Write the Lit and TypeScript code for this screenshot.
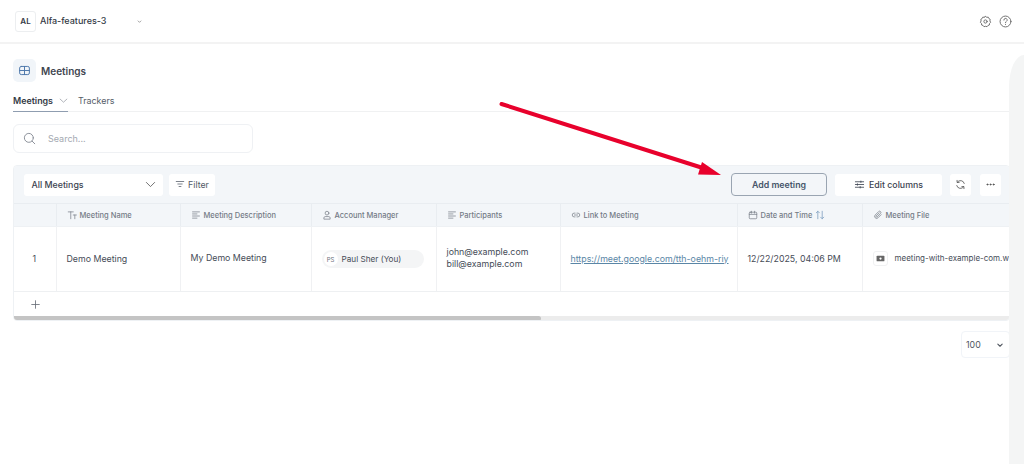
import { LitElement, html, css, svg } from "lit";
import { customElement } from "lit/decorators.js";

const ic = (body: unknown, size = 12, cls = "") => html`<svg class=${cls} width=${size} height=${size} viewBox="0 0 16 16" fill="none" stroke="currentColor" stroke-width="1.2" stroke-linecap="round" stroke-linejoin="round">${body}</svg>`;

const lines = svg`<path d="M2.5 3h11M2.5 6.3h7M2.5 9.6h11M2.5 13h7"/>`;

@customElement("app-root")
export class AppRoot extends LitElement {
  static styles = css`
    :host { display: block; width: 1024px; height: 464px; position: relative; overflow: hidden; background: #fff; font-family: Inter, "Liberation Sans", sans-serif; color: #3c4350; }
    * { box-sizing: border-box; }
    svg { display: block; flex: none; }
    .top { height: 44px; border-bottom: 2px solid #f3f3f3; display: flex; align-items: center; padding: 0 12px 0 15px; }
    .logo { width: 21px; height: 21px; border: 1px solid #eceef0; border-radius: 3px; display: flex; align-items: center; justify-content: center; font-size: 8px; font-weight: 600; color: #343a45; }
    .org { margin-left: 4px; width: 95px; font-size: 9px; font-weight: 500; color: #343a45; padding-bottom: 1px; }
    .small-chev { color: #777; }
    .top-right { margin-left: auto; display: flex; gap: 7px; color: #6f6f6f; }
    .main { padding: 15px 14px 0 13px; }
    .title { display: flex; align-items: center; gap: 5px; height: 23px; font-size: 10px; font-weight: 600; color: #3f4550; padding-bottom: 0; }
    .title-ic { width: 23px; height: 23px; border-radius: 5px; background: #f1f5f9; color: #4d77ab; display: flex; align-items: center; justify-content: center; }
    .tabs { margin-top: 7px; height: 23px; border-bottom: 1px solid #f0f1f2; display: flex; font-size: 8.9px; }
    .tab { height: 23px; display: flex; align-items: center; gap: 6px; padding-right: 1px; width: 55px; font-weight: 600; color: #343a45; border-bottom: 1px solid #8f9db0; }
    .tab svg { color: #8a8f98; }
    .tab2 { margin-left: 10px; display: flex; align-items: center; color: #555c68; }
    .search { margin-top: 12px; width: 240px; height: 29px; border: 1px solid #eff1f4; border-radius: 6px; display: flex; align-items: center; padding-left: 9px; gap: 12px; font-size: 9px; color: #a4a9b1; }
    .search svg { color: #8b9099; }
    .card { margin-top: 12px; border: 1px solid #eef1f4; border-radius: 4px; overflow: hidden; width: 997px; height: 156px; }
    .bar { height: 38px; background: #f3f6f9; border-bottom: 1px solid #e9edf1; display: flex; align-items: center; padding: 0 8px 0 10px; gap: 6px; }
    .btn { height: 22px; background: #fff; border-radius: 3px; display: flex; align-items: center; justify-content: center; font-size: 8.8px; color: #525a66; padding-bottom: 1px; }
    .select { width: 139px; justify-content: space-between; padding: 0 7px 0 7.500px; color: #3c4350; font-weight: 500; }
    .select svg { color: #555; }
    .filter { width: 46px; gap: 3px; }
    .right { margin-left: auto; display: flex; align-items: center; }
    .add { width: 96px; height: 23px; border: 1px solid #9aa5b2; background: #f3f6f9; border-radius: 4px; font-weight: 600; color: #47566b; }
    .edit { width: 107px; margin-left: 8px; gap: 4px; font-weight: 500; color: #3c4350; }
    .sq { width: 21px; margin-left: 8px; color: #555; padding-bottom: 0; }
    .sq.last { margin-left: 9px; }
    .row { display: grid; grid-template-columns: 43px 124px 131px 125px 124px 177px 125px 1fr; }
    .head { height: 23px; background: #f3f6f9; border-bottom: 1px solid #eef1f4; }
    .head > div { border-right: 1px solid #e9edf1; display: flex; align-items: center; gap: 3px; padding-left: 9.5px; font-size: 7.5px; font-weight: 500; color: #747b86; white-space: nowrap; overflow: hidden; }
    .head > div:last-child { border-right: 0; }
    .head svg { color: #7b818b; }
    .data { height: 65px; border-bottom: 1px solid #eef0f2; }
    .data > div { border-right: 1px solid #f0f1f3; display: flex; align-items: center; padding: 0 0 2px 9.5px; font-size: 8.8px; color: #464c57; white-space: nowrap; overflow: hidden; }
    .data > div:last-child { border-right: 0; }
    .data .num { padding-left: 18.5px; }
    .data .desc { padding-bottom: 4px; }
    .data .mgr { padding-bottom: 0; }
    .pill { width: 102px; height: 18px; border-radius: 9px; background: #f4f5f6; display: flex; align-items: center; gap: 4px; padding-left: 2px; font-size: 8.2px; color: #464c57; }
    .av { width: 14px; height: 14px; border-radius: 50%; background: #fff; display: flex; align-items: center; justify-content: center; font-size: 6px; color: #6b717b; }
    .emails { line-height: 12.5px; }
    a { color: #5a86a6; text-decoration: underline; }
    .fileic { width: 15px; height: 15px; border: 1px solid #f0f1f2; border-radius: 3px; display: flex; align-items: center; justify-content: center; margin-right: 7px; flex: none; }
    .data .file { font-size: 8px; }
    .addrow { height: 24px; display: flex; align-items: center; padding-left: 16px; color: #666c76; }
    .track { height: 5px; background: #ececec; }
    .thumb { width: 527px; height: 5px; background: #c4c4c4; border-radius: 0 3px 3px 0; }
    .pager { margin: 10px 0 0 auto; width: 49px; height: 27px; border: 1px solid #f1f4f8; border-radius: 4px; display: flex; align-items: center; justify-content: space-between; padding: 0 4px 0 4px; font-size: 8.8px; color: #50565f; }
    .strip { position: absolute; right: 0; top: 55px; width: 15px; height: 409px; background: #f4f5f5; border-top-left-radius: 15px 32px; }
    .arrow { position: absolute; left: 0; top: 0; pointer-events: none; }
  `;

  render() {
    return html`
      <div class="top">
        <div class="logo">AL</div>
        <div class="org">Alfa-features-3</div>
        ${ic(svg`<path d="M5.5 7l2.5 2.5L10.500 7"/>`, 9, "small-chev")}
        <div class="top-right">
          ${ic(svg`<path d="M8 1.700l1.500 1.100 1.900-.1.800 1.700 1.600 1-.4 1.900.9 1.700-1.300 1.400-.2 1.900-1.800.6-1.100 1.500L8 13.900l-1.900.5-1.100-1.500-1.800-.6-.2-1.900L1.700 9l.9-1.700-.4-1.900 1.600-1 .8-1.700 1.900.1z"/><circle cx="8" cy="8" r="2"/>`, 13)}
          ${ic(svg`<circle cx="8" cy="8" r="6.700"/><path d="M6 6.200a2 2 0 1 1 3 1.700c-.7.400-1 .9-1 1.600M8 11.700v.1"/>`, 13)}
        </div>
      </div>
      <div class="main">
        <div class="title">
          <div class="title-ic">${ic(svg`<rect x="2" y="3" width="12" height="10" rx="2"/><path d="M2 8h12M8 3v10"/>`, 13)}</div>
          Meetings
        </div>
        <div class="tabs">
          <div class="tab">Meetings ${ic(svg`<path d="M2 5.500l6 5.500 6-5.500"/>`, 9)}</div>
          <div class="tab2">Trackers</div>
        </div>
        <div class="search">
          ${ic(svg`<circle cx="7.200" cy="7.200" r="5.500"/><path d="M11.300 11.300l3.200 3.200"/>`, 13)}
          <span>Search...</span>
        </div>
        <div class="card">
          <div class="bar">
            <div class="btn select"><span>All Meetings</span>${ic(svg`<path d="M2 5l6 6 6-6"/>`, 11)}</div>
            <div class="btn filter">${ic(svg`<path d="M2 4h12M4.500 8h7M6.500 12h3"/>`, 10)}Filter</div>
            <div class="right">
              <div class="btn add">Add meeting</div>
              <div class="btn edit">${ic(svg`<path d="M2 4h12M2 8h12M2 12h12"/><path d="M10 3v2M5 7v2M9 11v2"/>`, 11)}Edit columns</div>
              <div class="btn sq">${ic(svg`<path d="M13.500 6.500A5.700 5.700 0 0 0 3.300 4.800M2.500 9.500a5.700 5.700 0 0 0 10.200 1.700M3 2v3h3M13 14v-3h-3"/>`, 11)}</div>
              <div class="btn sq last">${ic(svg`<circle cx="3.500" cy="8" r=".8" fill="currentColor"/><circle cx="8" cy="8" r=".8" fill="currentColor"/><circle cx="12.500" cy="8" r=".8" fill="currentColor"/>`, 11)}</div>
            </div>
          </div>
          <div class="row head">
            <div></div>
            <div>${ic(svg`<path d="M2 3h8M6 3v11M10 8h5M12.500 8v6"/>`, 10)}Meeting Name</div>
            <div>${ic(lines, 10)}Meeting Description</div>
            <div>${ic(svg`<circle cx="8" cy="5" r="3"/><path d="M3 14v-1.500c0-1 1-2 2-2h6c1 0 2 1 2 2V14z"/>`, 10)}Account Manager</div>
            <div>${ic(lines, 10)}Participants</div>
            <div>${ic(svg`<path d="M6.500 5H5a3 3 0 0 0 0 6h1.500M9.500 5H11a3 3 0 0 1 0 6H9.500M5.500 8h5"/>`, 10)}Link to Meeting</div>
            <div>${ic(svg`<rect x="2" y="3.500" width="12" height="10.500" rx="1.500"/><path d="M2 7h12M5.500 2v3M10.500 2v3"/>`, 10)}Date and Time <svg width="10" height="10" viewBox="0 0 16 16" fill="none" stroke="#7fa0c2" stroke-width="1.300" stroke-linecap="round" stroke-linejoin="round"><path d="M4.500 14V2M2 4.500L4.500 2 7 4.500M11.500 2v12M9 11.500l2.500 2.500 2.500-2.500"/></svg></div>
            <div>${ic(svg`<path d="M13 7.500l-5 5a3 3 0 0 1-4.500-4.500l5.500-5.500a2 2 0 0 1 3 3L6.500 11a1 1 0 0 1-1.500-1.500l5-5"/>`, 10)}Meeting File</div>
          </div>
          <div class="row data">
            <div class="num">1</div>
            <div>Demo Meeting</div>
            <div class="desc">My Demo Meeting</div>
            <div class="mgr"><div class="pill"><span class="av">PS</span>Paul Sher (You)</div></div>
            <div class="emails">john@example.com<br />bill@example.com</div>
            <div><a>https://meet.google.com/tth-oehm-riy</a></div>
            <div>12/22/2025, 04:06 PM</div>
            <div class="file"><span class="fileic"><svg width="9" height="9" viewBox="0 0 16 16"><rect x="1" y="3" width="14" height="10" rx="1.500" fill="#666"/><circle cx="8" cy="8" r="2" fill="#fff"/></svg></span>meeting-with-example-com.w</div>
          </div>
          <div class="addrow">${ic(svg`<path d="M8 2.500v11M2.500 8h11"/>`, 11)}</div>
          <div class="track"><div class="thumb"></div></div>
        </div>
        <div class="pager">100 ${ic(svg`<path d="M4.500 6.500L8 10l3.500-3.500" stroke-width="1.700"/>`, 10)}</div>
      </div>
      <div class="strip"></div>
      <svg class="arrow" width="1024" height="464" viewBox="0 0 1024 464" fill="none">
        <path d="M501.500 104L706 169" stroke="#e8012c" stroke-width="4" stroke-linecap="round"/>
        <path d="M702 162L721 175L698 174.500Z" fill="#e8012c"/>
      </svg>
    `;
  }
}
